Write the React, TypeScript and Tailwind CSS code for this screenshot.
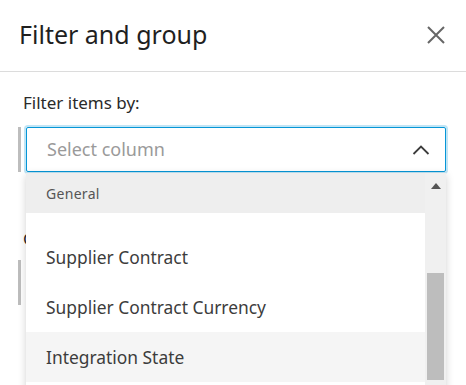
import React from 'react';

const font = { fontFamily: '"Noto Sans", "Open Sans", sans-serif' };

function CloseIcon() {
  return (
    <svg width="20" height="20" viewBox="0 0 20 20" className="text-[#666666]">
      <path d="M2 2 L18 18 M18 2 L2 18" stroke="currentColor" strokeWidth="2" fill="none" />
    </svg>
  );
}

function ChevronUp() {
  return (
    <svg width="18" height="10" viewBox="0 0 18 10" className="text-[#3c3c3c]">
      <path d="M1.5 9 L9 1.5 L16.5 9" stroke="currentColor" strokeWidth="1.8" fill="none" />
    </svg>
  );
}

const items = ['Supplier Contract', 'Supplier Contract Currency', 'Integration State'];

export default function App() {
  return (
    <div className="w-[466px] h-[385px] overflow-hidden bg-white" style={font}>
      {/* header */}
      <header className="h-[72px] flex items-center justify-between pl-[19px] pr-[20px] border-b border-[#dcdcdc]">
        <h1 className="text-[25px] text-[#1f1f1f] leading-none -mt-[2px]">Filter and group</h1>
        <button className="-mt-[2px]">
          <CloseIcon />
        </button>
      </header>

      <div className="pl-[18px] pr-[20px] pt-[20px]">
        <label className="block pl-[5px] text-[17px] text-[#2a2a2a] leading-[22px]">Filter items by:</label>

        <div className="relative mt-[13px]">
          <div className="flex">
            <div className="w-[3px] h-[45px] bg-[#bdbdbd]" />
            <div className="ml-[5px] flex-1 h-[45px] flex items-center justify-between pl-[20px] pr-[15px] border border-[#0696d7] rounded-[2px] shadow-[0_0_0_2px_rgba(6,150,215,0.25)]">
              <span className="text-[18px] text-[#9a9a9a]">Select column</span>
              <ChevronUp />
            </div>
          </div>

          {/* content under the menu */}
          <div className="pt-[56px]">
            <div className="pl-[5px] text-[17px] text-[#2a2a2a] leading-[22px]">Group items by:</div>
            <div className="flex mt-[10px]">
              <div className="w-[3px] h-[45px] bg-[#bdbdbd]" />
              <div className="ml-[5px] flex-1 h-[45px] border border-[#cccccc]" />
            </div>
          </div>

          {/* dropdown menu */}
          <div className="absolute left-[8px] right-0 top-[46px] h-[240px] flex bg-white shadow-[0_2px_8px_rgba(0,0,0,0.18)]">
            <div className="flex-1 flex flex-col">
              <div className="h-[40px] shrink-0 flex items-center pl-[20px] bg-[#eeeeee] text-[14px] text-[#555555] tracking-[0.3px]">
                General
              </div>
              <div className="h-[19px] shrink-0" />
              {items.map((it, i) => (
                <div
                  key={it}
                  className={`h-[50px] shrink-0 flex items-center pl-[20px] text-[17.4px] text-[#3c3c3c] ${i === 2 ? 'bg-[#f5f5f5]' : 'bg-white'}`}
                >
                  {it}
                </div>
              ))}
            </div>
            <div className="w-[21px] bg-[#f0f0f0] flex flex-col items-center">
              <div className="mt-[10px] w-0 h-0 border-l-[5px] border-r-[5px] border-b-[6px] border-l-transparent border-r-transparent border-b-[#555555]" />
              <div className="mt-[84px] w-[17px] h-[107px] bg-[#bdbdbd]" />
            </div>
          </div>
        </div>
      </div>
    </div>
  );
}
